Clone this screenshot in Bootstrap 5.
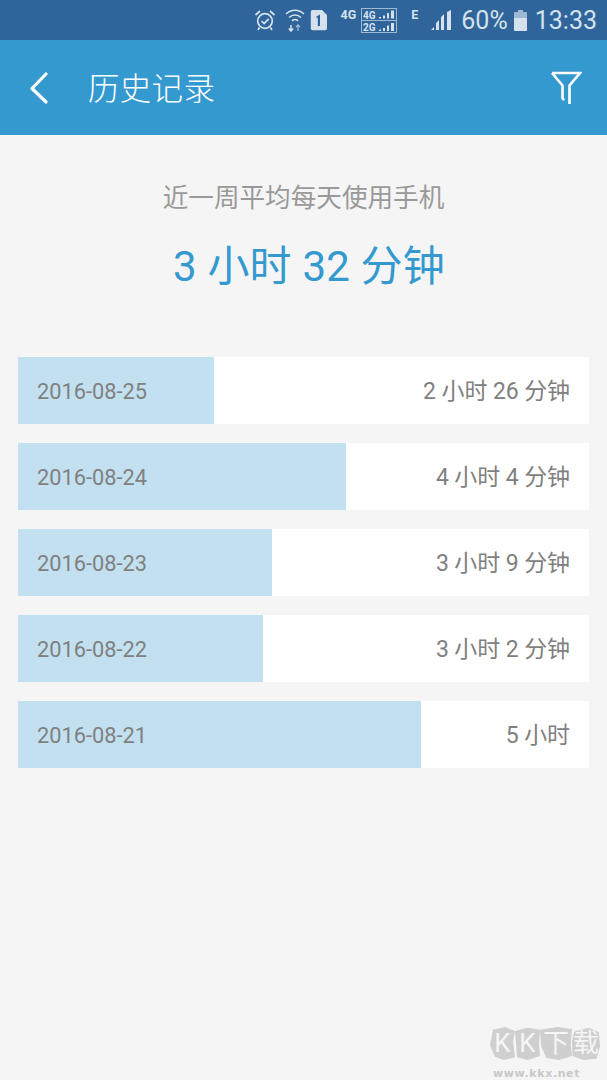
<!DOCTYPE html>
<html lang="zh">
<head>
<meta charset="utf-8">
<link href="https://cdn.jsdelivr.net/npm/bootstrap@5.3.0/dist/css/bootstrap.min.css" rel="stylesheet">
<style>
html,body{height:100%;}
body{background:#f5f5f5;font-family:"Roboto","Noto Sans CJK SC",sans-serif;overflow:hidden;}
.app-shell{width:607px;height:1080px;position:relative;background:#f5f5f5;}
.status-strip{height:40px;background:#2f659b;color:#d5e2ee;padding-right:10px;}
.status-strip svg{display:block;flex:none;}
.status-text{font-size:25px;line-height:1;}
.tiny-tag{font-size:12.500px;font-weight:700;line-height:1;}
.title-bar{height:95px;background:#3399cf;color:#fff;padding:0 25px 0 28px;}
.title-text{font-size:31.500px;line-height:1;margin-left:40px;letter-spacing:.3px;font-weight:300;padding-top:4px;}
.summary-label{font-size:25.600px;color:#999;line-height:1;margin-top:51px;}
.summary-value{font-size:42px;color:#3399cf;line-height:1;margin-top:34.500px;padding-left:11px;letter-spacing:.2px;}
.usage-list{margin:68.500px 18.500px 0 18px;gap:19px;}
.usage-row{height:67px;background:#fff;position:relative;padding:4px 18.500px 0 19px;}
.usage-fill{position:absolute;left:0;top:0;bottom:0;background:#c2e0f0;}
.usage-date{position:relative;color:#808080;font-size:21.800px;}
.usage-time{position:relative;color:#808080;font-size:23px;letter-spacing:-.1px;}
.mark-wrap{position:absolute;left:490px;top:1027px;width:112px;}
.mark-row{height:33px;}
.mark-chip{height:33px;background:#cfcfcf;color:#f5f5f5;font-size:26px;line-height:33px;text-align:center;flex:none;}
.mark-a{width:25px;clip-path:polygon(12% 8%,60% 0,100% 12%,92% 45%,100% 92%,55% 100%,20% 90%,0 55%);}
.mark-b{width:25px;clip-path:polygon(0 12%,50% 2%,100% 8%,96% 50%,100% 88%,50% 100%,8% 92%,4% 50%);}
.mark-c{width:32px;clip-path:polygon(0 8%,55% 0,100% 6%,96% 55%,100% 88%,60% 100%,20% 94%,4% 60%);}
.mark-d{width:28px;clip-path:polygon(8% 14%,60% 2%,96% 16%,100% 60%,88% 96%,40% 100%,2% 88%,0 45%);}
.mark-url{font-family:"DejaVu Sans",sans-serif;font-size:11px;font-weight:700;color:#c8c8c8;line-height:1;margin-top:8px;padding-left:3px;letter-spacing:.6px;white-space:nowrap;}
</style>
</head>
<body>
<div class="app-shell">
  <div class="status-strip d-flex align-items-center justify-content-end">
    <svg width="22" height="22" viewBox="0 0 22 22" fill="none" stroke="#d5e2ee" stroke-width="1.700" style="margin-right:9px"><circle cx="11" cy="12" r="7.300"/><path d="M7.500 12l2.600 2.600 4.600-4.800M1.500 6L6 2M20.500 6L16 2M5.500 18.500L4 21M16.500 18.500L18 21"/></svg>
    <svg width="20" height="24" viewBox="0 0 20 24" fill="none" stroke="#d5e2ee" stroke-width="1.600" style="margin-right:5px"><path d="M1 6c5-5 13-5 18 0M4 9.500c3.500-3.300 8.500-3.300 12 0M7 12.800c2-1.700 4-1.700 6 0"/><path d="M6 17v6M3.800 20.500L6 23l2.200-2.500" stroke-width="1.500"/><path d="M13 23v-6M11 19l2-2 2 2" stroke="#9fb9d2" stroke-width="1.300"/></svg>
    <svg width="18" height="22" viewBox="0 0 18 22" style="margin-right:13px"><path d="M2.500 1H12l5 5v13.500a1.800 1.800 0 0 1-1.800 1.800H2.500A1.800 1.800 0 0 1 .8 19.500V2.800A1.800 1.800 0 0 1 2.500 1z" fill="#d5e2ee"/><path d="M6.500 7.500L10 5.500V17H7.800V8.500L6.500 9.200z" fill="#2f659b"/></svg>
    <span class="tiny-tag" style="margin:-10px 5px 0 0">4G</span>
    <svg width="36" height="25" viewBox="0 0 36 25" style="margin-right:14px"><rect x=".5" y=".5" width="35" height="24" fill="none" stroke="#9fb9d2"/><path d="M1 12.500h34" stroke="#9fb9d2"/><text x="2" y="10.500" font-size="10" font-weight="700" font-family="Roboto" fill="#d5e2ee">4G</text><text x="2" y="23" font-size="10" font-weight="700" font-family="Roboto" fill="#d5e2ee">2G</text><path d="M18 9h2v1.500h-2zM22 7.500h2v3h-2zM26 5h2v5.500h-2zM30 2.500h3v8h-3zM18 21.500h2V23h-2zM22 20h2v3h-2zM26 17.500h2V23h-2zM30 15h3v8h-3z" fill="#d5e2ee"/></svg>
    <span class="tiny-tag" style="margin:-10px 13px 0 0">E</span>
    <svg width="21" height="22" viewBox="0 0 21 22" style="margin-right:9px"><path d="M0 21l3-3v3zM5 21v-7l3-3v10zM10 21V8l3-3v16zM16 21V3l4-2v20z" fill="#d5e2ee"/></svg>
    <span class="status-text" style="margin-right:6px">60%</span>
    <svg width="13" height="22" viewBox="0 0 13 22" style="margin-right:8px"><path d="M4 1h5v2h3a1 1 0 0 1 1 1v17a1 1 0 0 1-1 1H1a1 1 0 0 1-1-1V4a1 1 0 0 1 1-1h3z" fill="#9fb9d2"/><path d="M0 9h13v12a1 1 0 0 1-1 1H1a1 1 0 0 1-1-1z" fill="#d5e2ee"/></svg>
    <span class="status-text">13:33</span>
  </div>
  <div class="title-bar d-flex align-items-center">
    <svg width="20" height="32" viewBox="0 0 20 32" fill="none" stroke="#fff" stroke-width="3.200" stroke-linecap="round" stroke-linejoin="round" style="flex:none"><path d="M18 2L4 16.500 18 30"/></svg>
    <span class="title-text">历史记录</span>
    <svg class="ms-auto" width="32" height="36" viewBox="0 0 32 36" fill="none" stroke="#fff" stroke-width="2.600"><path d="M2 3h28L19.500 15.500V34M2 3l10.500 12.500V27.500c0 1.300.7 2 2 2"/></svg>
  </div>
  <div class="text-center summary-label">近一周平均每天使用手机</div>
  <div class="text-center summary-value">3 小时 32 分钟</div>
  <div class="usage-list d-flex flex-column">
    <div class="usage-row d-flex align-items-center justify-content-between"><div class="usage-fill" style="width:196px"></div><span class="usage-date">2016-08-25</span><span class="usage-time">2 小时 26 分钟</span></div>
    <div class="usage-row d-flex align-items-center justify-content-between"><div class="usage-fill" style="width:328px"></div><span class="usage-date">2016-08-24</span><span class="usage-time">4 小时 4 分钟</span></div>
    <div class="usage-row d-flex align-items-center justify-content-between"><div class="usage-fill" style="width:254px"></div><span class="usage-date">2016-08-23</span><span class="usage-time">3 小时 9 分钟</span></div>
    <div class="usage-row d-flex align-items-center justify-content-between"><div class="usage-fill" style="width:245px"></div><span class="usage-date">2016-08-22</span><span class="usage-time">3 小时 2 分钟</span></div>
    <div class="usage-row d-flex align-items-center justify-content-between"><div class="usage-fill" style="width:403px"></div><span class="usage-date">2016-08-21</span><span class="usage-time">5 小时</span></div>
  </div>
  <div class="mark-wrap">
    <div class="mark-row d-flex"><span class="mark-chip mark-a">K</span><span class="mark-chip mark-b">K</span><span class="mark-chip mark-c">下</span><span class="mark-chip mark-d">载</span></div>
    <div class="mark-url">www.kkx.net</div>
  </div>
</div>
<script src="https://cdn.jsdelivr.net/npm/bootstrap@5.3.0/dist/js/bootstrap.bundle.min.js"></script>
</body>
</html>
